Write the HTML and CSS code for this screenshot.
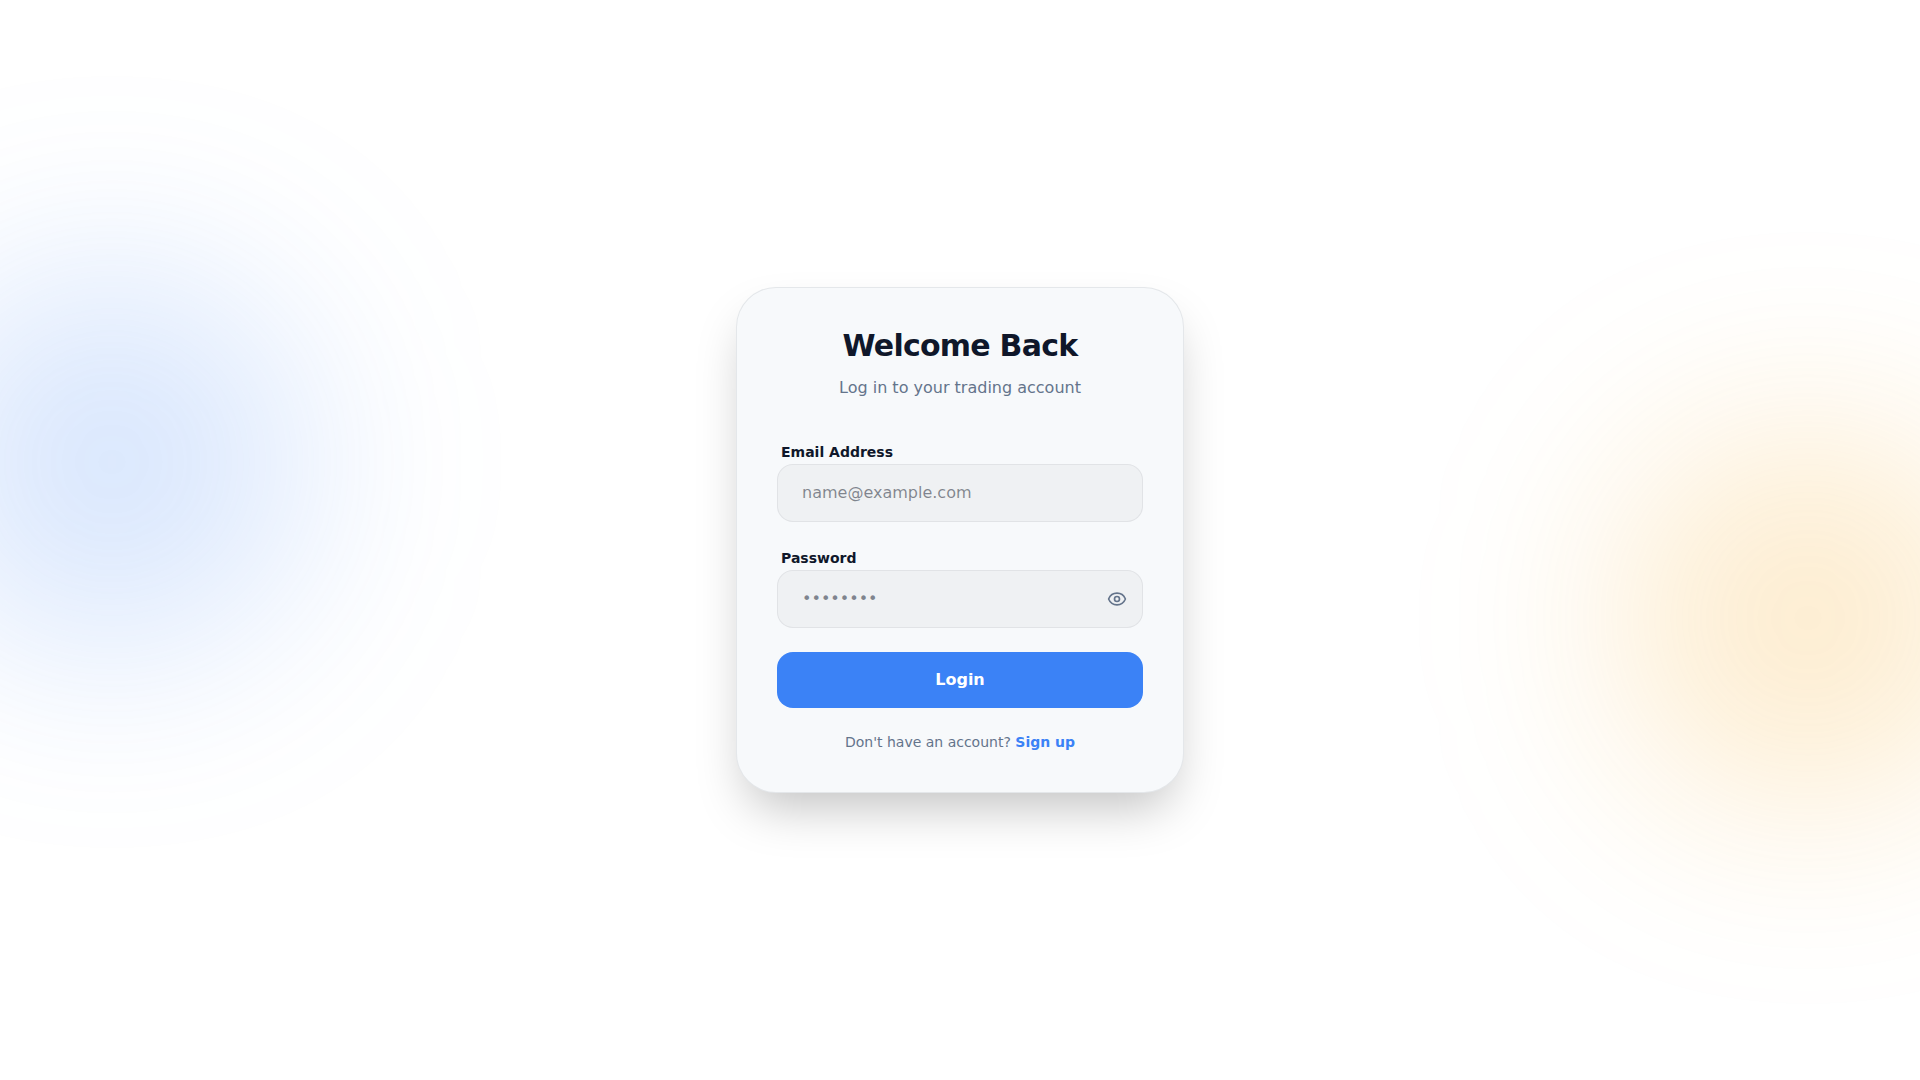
FILE: index.html
```html
<!DOCTYPE html>
<html lang="en">
<head>
  <meta charset="utf-8">
  <meta name="viewport" content="width=device-width, initial-scale=1">
  <title>Log in</title>
  <link rel="stylesheet" href="styles.css">
</head>
<body>
  <main class="page">
    <div class="glow glow-blue"></div>
    <div class="glow glow-amber"></div>

    <section class="card">
      <header class="card-header">
        <h1 class="title">Welcome Back</h1>
        <p class="subtitle">Log in to your trading account</p>
      </header>

      <form class="form">
        <div class="field">
          <label class="label" for="email">Email Address</label>
          <input class="input" id="email" type="email" placeholder="name@example.com">
        </div>

        <div class="field">
          <label class="label" for="password">Password</label>
          <div class="password">
            <input class="input" id="password" type="password" placeholder="••••••••">
            <button class="reveal" type="button" aria-label="Show password">
              <svg class="icon" viewBox="0 0 24 24" fill="none" stroke="currentColor" stroke-width="2" stroke-linecap="round" stroke-linejoin="round">
                <path d="M2.062 12.348a1 1 0 0 1 0-.696 10.75 10.75 0 0 1 19.876 0 1 1 0 0 1 0 .696 10.75 10.75 0 0 1-19.876 0"/>
                <circle cx="12" cy="12" r="3"/>
              </svg>
            </button>
          </div>
        </div>

        <button class="submit" type="submit">Login</button>
      </form>

      <p class="footer">Don't have an account? <a class="link" href="#">Sign up</a></p>
    </section>
  </main>
</body>
</html>
```
FILE: styles.css
```css
*,
*::before,
*::after {
  box-sizing: border-box;
}

body {
  margin: 0;
  background: #ffffff;
  color: #0f172a;
  font-family: "DejaVu Sans", sans-serif;
  font-size: 16px;
  line-height: 24px;
}

h1,
p {
  margin: 0;
}

.page {
  position: relative;
  display: flex;
  align-items: center;
  justify-content: center;
  min-height: 100vh;
  padding: 24px;
  overflow: hidden;
}

.glow {
  position: absolute;
  width: 384px;
  height: 384px;
  border-radius: 50%;
  filter: blur(100px);
}

.glow-blue {
  top: 25%;
  left: -80px;
  background: rgba(59, 130, 246, 0.2);
}

.glow-amber {
  right: -80px;
  bottom: 25%;
  background: rgba(245, 158, 11, 0.2);
}

.card {
  position: relative;
  width: 100%;
  max-width: 448px;
  padding: 40px;
  border: 1px solid rgba(15, 23, 42, 0.08);
  border-radius: 40px;
  background: #f7f9fb;
  box-shadow: 0 25px 50px -12px rgba(0, 0, 0, 0.25);
}

.card-header {
  margin-bottom: 40px;
  text-align: center;
}

.title {
  margin-bottom: 12px;
  font-size: 30px;
  line-height: 36px;
  font-weight: 700;
  letter-spacing: -0.025em;
}

.subtitle {
  color: #64748b;
}

.form {
  display: flex;
  flex-direction: column;
  gap: 24px;
}

.label {
  margin-left: 4px;
  font-size: 14px;
  font-weight: 700;
}

.input {
  display: block;
  width: 100%;
  padding: 16px 24px;
  border: 1px solid rgba(15, 23, 42, 0.06);
  border-radius: 16px;
  background: #eff1f3;
  color: inherit;
  font: inherit;
}

.input::placeholder {
  color: rgba(15, 23, 42, 0.5);
  opacity: 1;
}

.password {
  position: relative;
}

.reveal {
  position: absolute;
  top: 0;
  right: 16px;
  bottom: 0;
  display: flex;
  align-items: center;
  padding: 0;
  border: 0;
  background: none;
  color: #64748b;
  cursor: pointer;
}

.icon {
  width: 20px;
  height: 20px;
}

.submit {
  padding: 16px;
  border: 0;
  border-radius: 16px;
  background: #3b82f6;
  color: #ffffff;
  font: inherit;
  font-weight: 700;
  cursor: pointer;
}

.footer {
  margin-top: 24px;
  color: #64748b;
  font-size: 14px;
  line-height: 20px;
  text-align: center;
}

.link {
  color: #3b82f6;
  font-weight: 700;
  text-decoration: none;
}
```
